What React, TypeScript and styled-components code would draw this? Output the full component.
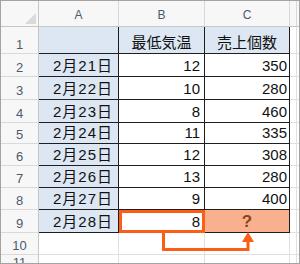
import styled, { createGlobalStyle } from 'styled-components';

const GlobalStyle = createGlobalStyle`
  html, body {
    margin: 0;
    padding: 0;
    background: #ffffff;
  }
`;

const ORANGE = '#fb5f17';
const INK = '#4b5a6e';

type Row = {
  n: number;
  h: number;
  a: string;
  b: string;
  c: string;
  title?: boolean;
  last?: boolean;
};

const rows: Row[] = [
  { n: 1, h: 27, a: '', b: '最低気温', c: '売上個数', title: true },
  { n: 2, h: 23, a: '2月21日', b: '12', c: '350' },
  { n: 3, h: 23, a: '2月22日', b: '10', c: '280' },
  { n: 4, h: 23, a: '2月23日', b: '8', c: '460' },
  { n: 5, h: 21, a: '2月24日', b: '11', c: '335' },
  { n: 6, h: 22, a: '2月25日', b: '12', c: '308' },
  { n: 7, h: 22, a: '2月26日', b: '13', c: '280' },
  { n: 8, h: 22, a: '2月27日', b: '9', c: '400' },
  { n: 9, h: 23, a: '2月28日', b: '8', c: '?', last: true },
];

// row 11 runs past the bottom edge and gets clipped by the frame
const emptyRows = [
  { n: 10, h: 22 },
  { n: 11, h: 17 },
];

const Frame = styled.div`
  position: relative;
  width: 300px;
  height: 264px;
  box-sizing: border-box;
  border: 1px solid #a3a3a3;
  overflow: hidden;
  background: #fff;
  font-family: 'Liberation Sans', 'Noto Sans CJK JP', sans-serif;
`;

const Sheet = styled.div<{ $rows: string }>`
  display: grid;
  grid-template-columns: 38px 80px 86px 85px 7px 1fr;
  grid-template-rows: ${(p) => p.$rows};
`;

const Corner = styled.div`
  box-sizing: border-box;
  background: #f7f7f7;
  border-right: 1px solid #c6c6c6;
  border-bottom: 1px solid #c6c6c6;
  display: flex;
  justify-content: flex-end;
  align-items: flex-end;
  padding: 0 2px 2px 0;
`;

const Triangle = styled.div`
  width: 0;
  height: 0;
  border-left: 11px solid transparent;
  border-bottom: 11px solid #dadada;
`;

const ColHead = styled.div<{ $edge?: boolean }>`
  box-sizing: border-box;
  background: #f7f7f7;
  border-right: ${(p) => (p.$edge ? 'none' : '1px solid #d9d9d9')};
  border-bottom: 1px solid #c6c6c6;
  display: flex;
  justify-content: center;
  align-items: center;
  padding-top: 3px;
  font-size: 12px;
  color: ${INK};
`;

const RowHead = styled.div`
  box-sizing: border-box;
  background: #f7f7f7;
  border-right: 1px solid #c6c6c6;
  border-bottom: 1px solid #d9d9d9;
  display: flex;
  justify-content: center;
  align-items: flex-end;
  padding-bottom: 1px;
  font-size: 13px;
  line-height: 15px;
  color: ${INK};
  overflow: hidden;
`;

const Cell = styled.div<{
  $fill?: string;
  $align?: 'left' | 'center' | 'right';
  $pad?: number;
  $spread?: boolean;
  $right?: 'ink' | 'grid' | 'none';
  $bottom?: 'ink' | 'grid';
  $mark?: boolean;
}>`
  box-sizing: border-box;
  background: ${(p) => p.$fill ?? '#fff'};
  border-right: ${(p) =>
    p.$right === 'ink' ? '1px solid #1e1e1e' : p.$right === 'none' ? 'none' : '1px solid #e0e0e0'};
  border-bottom: ${(p) => (p.$bottom === 'ink' ? '1px solid #1e1e1e' : '1px solid #e0e0e0')};
  display: flex;
  align-items: flex-end;
  justify-content: ${(p) =>
    p.$align === 'center' ? 'center' : p.$align === 'left' ? 'flex-start' : 'flex-end'};
  padding: 0 ${(p) => p.$pad ?? 3}px 1px 0;
  font-size: 15px;
  line-height: 18px;
  letter-spacing: ${(p) => (p.$spread ? '1px' : 'normal')};
  color: #111;
  white-space: nowrap;
  outline: ${(p) => (p.$mark ? `3px solid ${ORANGE}` : 'none')};
  outline-offset: -3px;
  position: ${(p) => (p.$mark ? 'relative' : 'static')};
  z-index: ${(p) => (p.$mark ? 1 : 0)};
`;

const Question = styled.span`
  font-weight: 700;
  font-size: 17px;
  color: #8c4514;
`;

const Connector = styled.svg`
  position: absolute;
  left: 0;
  top: 0;
  pointer-events: none;
  z-index: 2;
`;

function App() {
  const heights = [26, ...rows.map((r) => r.h), ...emptyRows.map((r) => r.h)]
    .map((h) => `${h}px`)
    .join(' ');

  return (
    <>
      <GlobalStyle />
      <Frame>
        <Sheet $rows={heights}>
          <Corner>
            <Triangle />
          </Corner>
          <ColHead>A</ColHead>
          <ColHead>B</ColHead>
          <ColHead>C</ColHead>
          <ColHead />
          <ColHead $edge />

          {rows.map((r) => (
            <Row key={r.n} row={r} />
          ))}

          {emptyRows.map((r) => (
            <EmptyRow key={r.n} n={r.n} />
          ))}
        </Sheet>

        <Connector width="298" height="262" viewBox="0 0 298 262">
          <path
            d="M162.5 231 V248.5 H247 V240"
            fill="none"
            stroke={ORANGE}
            strokeWidth="3"
          />
          <polygon points="241,241 253,241 247,231" fill={ORANGE} />
        </Connector>
      </Frame>
    </>
  );
}

function Row({ row }: { row: Row }) {
  const blue = '#dce7f3';
  return (
    <>
      <RowHead>{row.n}</RowHead>
      <Cell $fill={blue} $right="ink" $bottom="ink" $pad={5} $spread>
        {row.a}
      </Cell>
      <Cell
        $fill={row.title ? blue : '#fff'}
        $align={row.title ? 'center' : 'right'}
        $right="ink"
        $bottom="ink"
        $mark={row.last}
        $pad={row.title ? 0 : 4}
      >
        {row.b}
      </Cell>
      <Cell
        $fill={row.title ? blue : row.last ? '#f8b08e' : '#fff'}
        $align={row.title || row.last ? 'center' : 'right'}
        $right="ink"
        $bottom="ink"
        $pad={row.title || row.last ? 0 : 2}
      >
        {row.last ? <Question>?</Question> : row.c}
      </Cell>
      <Cell />
      <Cell $right="none" />
    </>
  );
}

function EmptyRow({ n }: { n: number }) {
  return (
    <>
      <RowHead>{n}</RowHead>
      <Cell />
      <Cell />
      <Cell />
      <Cell />
      <Cell $right="none" />
    </>
  );
}

export default App;
